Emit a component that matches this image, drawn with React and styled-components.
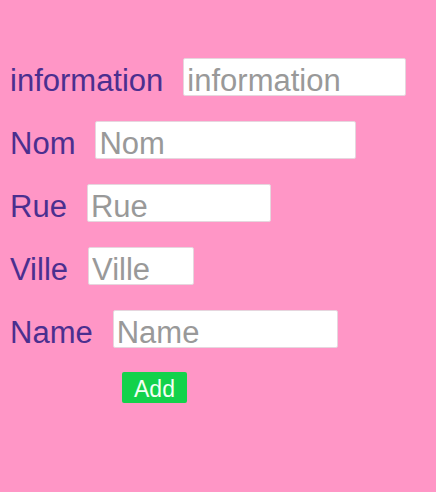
import React from "react";
import styled, { createGlobalStyle } from "styled-components";

const Global = createGlobalStyle`
  html, body { margin: 0; padding: 0; background: #ff96c6; }
  body { font-family: "Liberation Sans", Arial, sans-serif; }
`;

const Page = styled.div`
  width: 436px;
  height: 492px;
  box-sizing: border-box;
  padding: 58px 10px 0 10px;
  background: #ff96c6;
  display: flex;
  flex-direction: column;
  gap: 25px;
`;

const Row = styled.div`
  display: flex;
  align-items: baseline;
  gap: 20px;
  height: 38px;
`;

const Label = styled.label`
  font-size: 31px;
  color: #4b2f8f;
  line-height: 30px;
`;

const Input = styled.input`
  box-sizing: border-box;
  width: ${(p) => p.$w}px;
  height: 38px;
  margin: 0;
  padding: 8px 3px 0 3px;
  border: 1px solid #e6d6de;
  border-radius: 2px;
  background: #fff;
  font-family: "Liberation Sans", Arial, sans-serif;
  font-size: 31px;
  line-height: 29px;
  color: #333;
  outline: none;
  &::placeholder { color: #999; }
`;

const ButtonRow = styled.div`
  display: flex;
  padding-left: 112px;
  margin-top: -1px;
`;

const Button = styled.button`
  width: 65px;
  height: 31px;
  padding: 3px 0 0 0;
  border: none;
  border-radius: 2px;
  background: #13d24b;
  color: #f4fff4;
  font-family: "Liberation Sans", Arial, sans-serif;
  font-size: 23px;
  line-height: 27px;
  cursor: pointer;
`;

const fields = [
  { label: "information", w: 223 },
  { label: "Nom", w: 261 },
  { label: "Rue", w: 184 },
  { label: "Ville", w: 106 },
  { label: "Name", w: 225 },
];

export default function App() {
  return (
    <>
      <Global />
      <Page>
        {fields.map((f) => (
          <Row key={f.label}>
            <Label>{f.label}</Label>
            <Input $w={f.w} placeholder={f.label} />
          </Row>
        ))}
        <ButtonRow>
          <Button>Add</Button>
        </ButtonRow>
      </Page>
    </>
  );
}
